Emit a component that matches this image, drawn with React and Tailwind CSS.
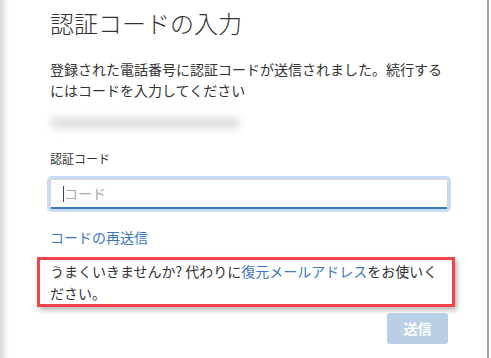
import React from 'react';

export default function App() {
    return (
        <div className="w-[491px] h-[358px] bg-white flex overflow-hidden" style={{ fontFamily: '"Noto Sans CJK JP", "Noto Sans", sans-serif' }}>
            {/* left shadow edge */}
            <div className="w-[9px] h-full bg-gradient-to-r from-[#d4d4d4] via-[#ececec] to-white" />

            {/* dialog panel */}
            <div className="w-[480px] h-full border-r-2 border-[#a3a3a3] pl-[41px] pt-[7px]">
                <h1 className="text-[24px] leading-[32px] text-[#333] font-light">認証コードの入力</h1>

                <p className="mt-[20px] text-[14px] leading-[21px] text-[#333]">
                    登録された電話番号に認証コードが送信されました。続行する<br />
                    にはコードを入力してください
                </p>

                {/* blurred email */}
                <div className="mt-[16px] h-[12px] w-[190px] flex items-center">
                    <div className="h-[10px] w-full rounded-full bg-[#dadada] blur-[4px]" />
                </div>

                <div className="mt-[22px] text-[12px] leading-[16px] text-[#333]">認証コード</div>

                <div className="mt-[12px] w-[398px] h-[30px] rounded-[2px] border border-[#d6d6d6] border-b-2 border-b-[#3b78c4] shadow-[0_0_0_3px_#c8dcf8] flex items-center pl-[12px]">
                    <span className="w-px h-[16px] bg-[#444]" />
                    <span className="text-[14px] text-[#aaa]">コード</span>
                </div>

                <div className="mt-[18px] text-[14px] leading-[20px] text-[#3c78c3]">コードの再送信</div>

                <div className="mt-[10px] -ml-[13px] w-[418px] border-[3px] border-[#f0434a] pl-[10px] text-[14px] leading-[22px] text-[#333] shadow-[2px_3px_5px_rgba(0,0,0,0.3)]">
                    うまくいきませんか? 代わりに<span className="text-[#3c78c3]">復元メールアドレス</span>をお使いく<br />
                    ださい。
                </div>

                <div className="mt-[6px] w-[398px] flex justify-end">
                    <button className="w-[61px] h-[31px] rounded-[3px] bg-[#b9cfe5] text-white text-[14px] font-bold">送信</button>
                </div>
            </div>
        </div>
    );
}
